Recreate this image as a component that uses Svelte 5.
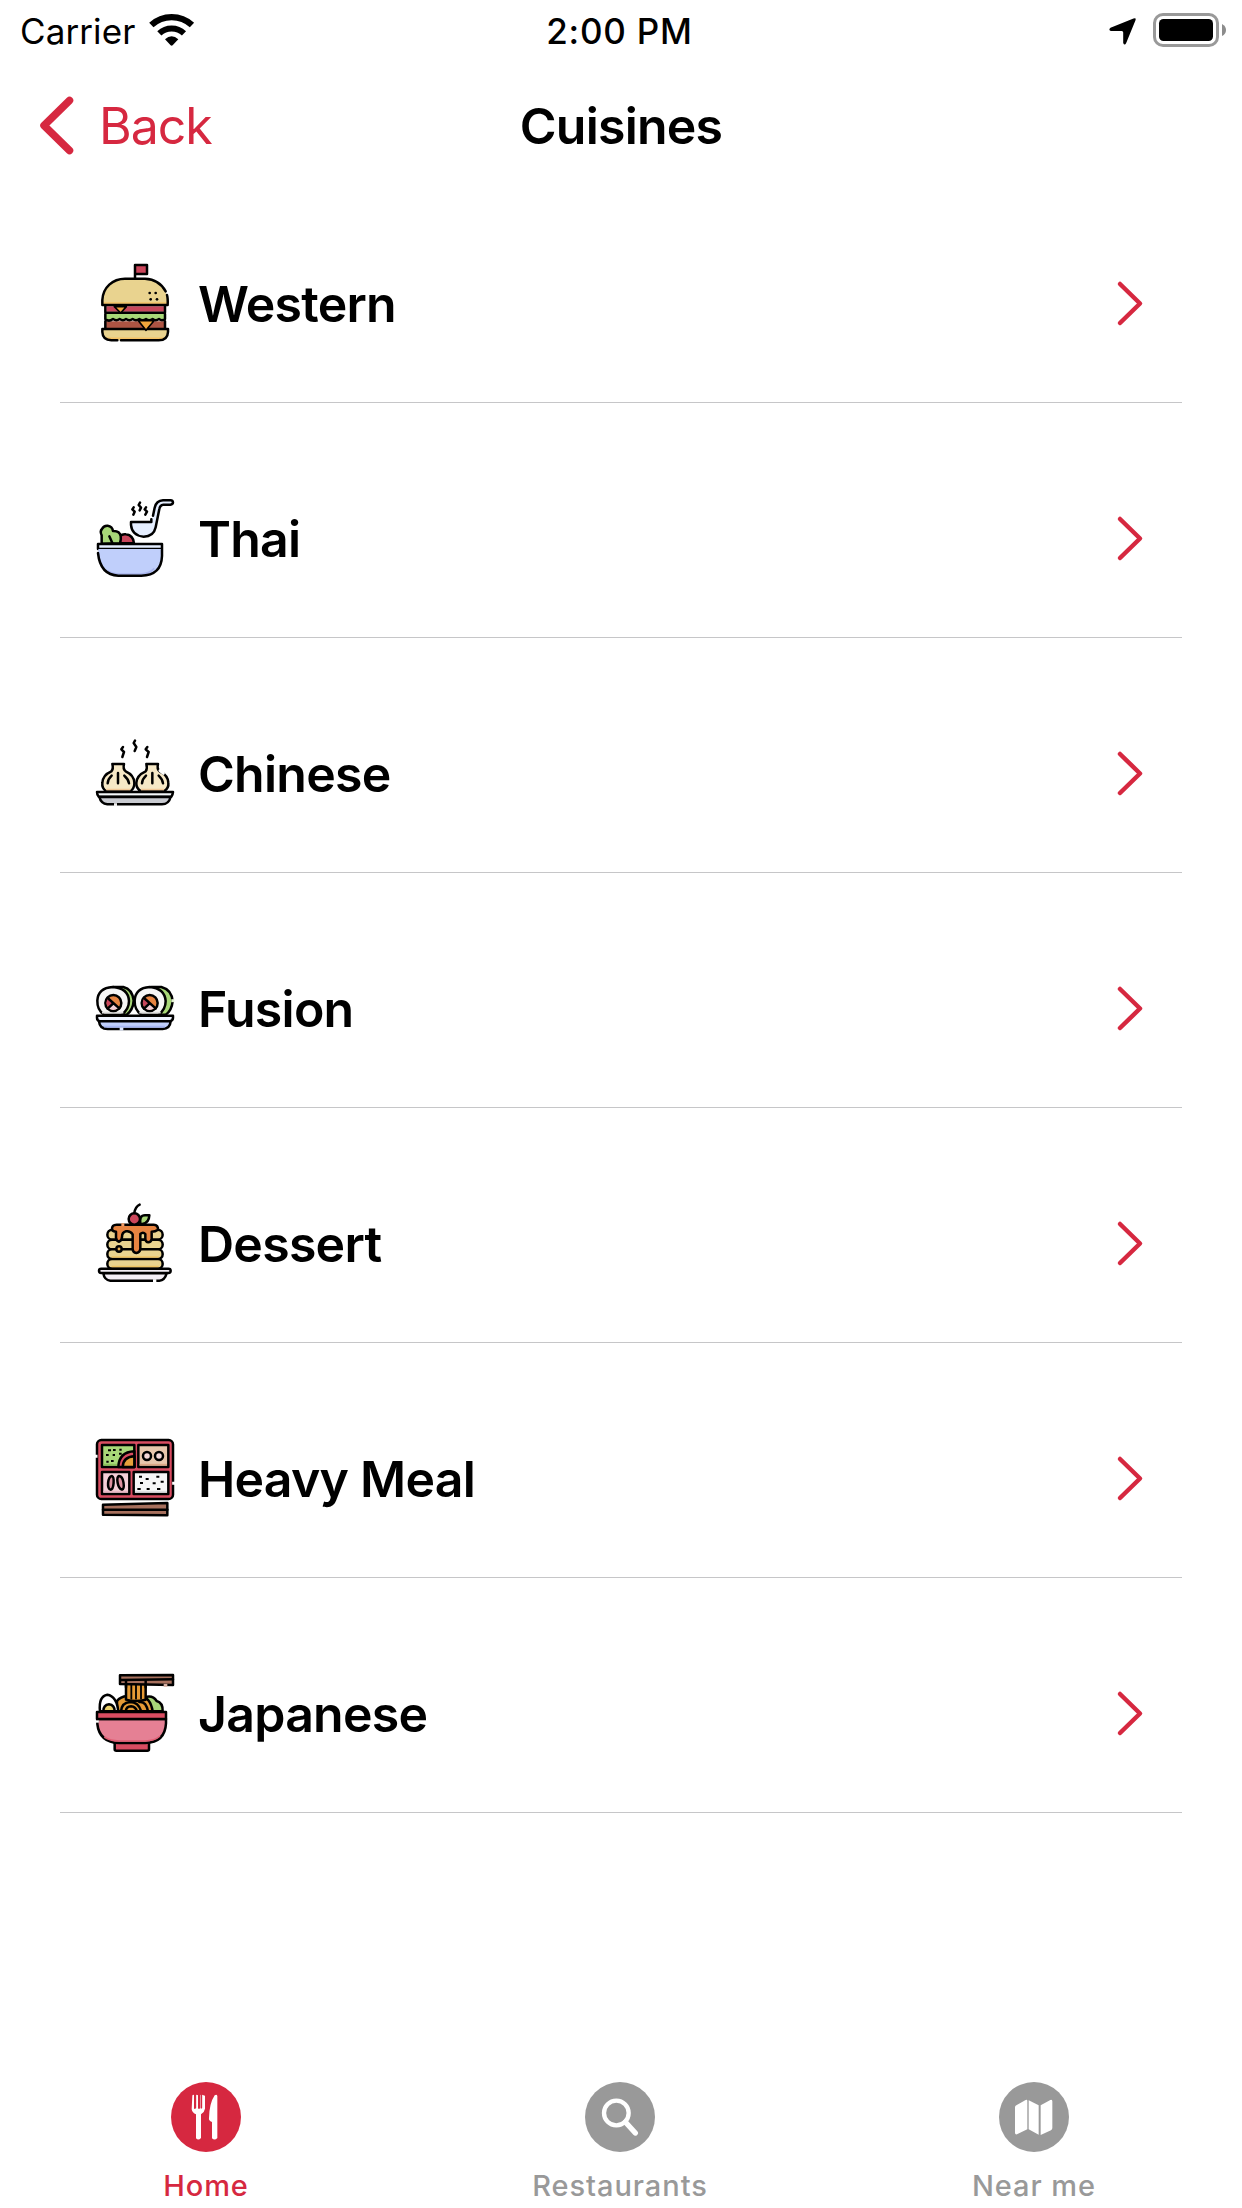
<script>
  const cuisines = ['Western', 'Thai', 'Chinese', 'Fusion', 'Dessert', 'Heavy Meal', 'Japanese'];
  const tabs = [
    { id: 'home', label: 'Home' },
    { id: 'restaurants', label: 'Restaurants' },
    { id: 'near', label: 'Near me' }
  ];
  let active = $state('home');
</script>

<div class="screen">
  <header class="status">
    <div class="carrier">
      <span>Carrier</span>
      <svg class="wifi" viewBox="0 0 136 98">
        <path d="M7 36A90 90 0 0 1 129 36" fill="none" stroke="#000" stroke-width="19" />
        <path d="M31 61A54 54 0 0 1 105 61" fill="none" stroke="#000" stroke-width="18" />
        <path d="M48 79Q68 61 88 79L71 97Q68 99 65 97Z" />
      </svg>
    </div>
    <span class="time">2:00 PM</span>
    <div class="indicators">
      <svg class="location" viewBox="0 0 27 27"><path d="M24.5.6Q27.6-.6 26.5 2.3L17.2 25Q15.6 28 14.2 25V14.5Q14.200 13 12.800 13H2Q-1 12 1.500 9.800Z" /></svg>
      <svg class="battery" viewBox="0 0 74 34">
        <rect x="1.500" y="1.500" width="63" height="31" rx="8.500" fill="none" stroke="#999" stroke-width="3" />
        <rect x="6" y="6" width="54" height="22" rx="4.500" />
        <path d="M69 11Q73 13 73 17T69 23Z" fill="#8c8c8c" />
      </svg>
    </div>
  </header>

  <nav class="navbar">
    <button class="back">
      <svg class="back-icon" viewBox="0 0 33 57"><path d="M29.500 3.500L4 28.500L29.500 53.500" /></svg>
      <span>Back</span>
    </button>
    <h1>Cuisines</h1>
  </nav>

  <ul class="list">
    {#each cuisines as name}
      <li class="row">
        {#if name === 'Western'}
          <svg class="food" viewBox="48 42 234 234">
            <path d="M165 84V45H201V72H168" fill="#cb465b" />
            <path d="M67 165V150C69 112 98 86 135 86H195C233 87 258 111 263 148V165Z" fill="#e9d38f" stroke="none" />
            <path d="M70 159H262" class="shade" stroke="#f5c265" />
            <path d="M79 169H252V185H79Z" fill="#c8465b" stroke="none" />
            <path d="M76 192H255V207Q246 214 237 207Q227 214 218 207Q207 214 198 207Q188 214 178 207Q168 214 158 207Q148 214 138 207Q129 214 119 207Q109 214 99 207Q86 217 76 207Z" fill="#a8d878" stroke="none" />
            <path d="M76 214H255V235H76Z" fill="#ad5443" stroke="none" />
            <path d="M67 237H264V246Q263 271 236 271H94Q68 270 67 246Z" fill="#e9d38f" stroke="none" />
            <path d="M76 265H254" class="shade" stroke="#f5c265" />
            <path d="M67 165V150C69 112 98 86 135 86H195Q238 88 257 124M261 135Q264 145 263 165H67M76 188H255M76 168V187M255 168V187M76 192V207Q86 217 99 207Q109 214 119 207Q129 214 138 207Q148 214 158 207Q168 214 178 207Q188 214 198 207Q207 214 218 207Q227 214 237 207Q246 214 255 207V192M76 214V235M255 214V235M112 271H94Q68 270 67 246V237H264V246Q263 271 236 271H123" fill="none" />
            <path d="M103 170H139L122 189ZM175 212H222L198 241Z" fill="#f2a63c" stroke-width="5" />
            <g fill="#000" stroke="none"><circle cx="209" cy="129" r="4" /><circle cx="227" cy="129" r="4" /><circle cx="212" cy="148" r="4" /><circle cx="231" cy="148" r="4" /></g>
          </svg>
        {:else if name === 'Thai'}
          <svg class="food" viewBox="48 42 234 234">
            <path d="M120 175V153Q128 146 138 148Q160 151 162 175Z" fill="#c9465c" />
            <path d="M65 176V151Q59 139 66 132Q71 121 83 122Q97 124 99 138Q119 137 122 153Q124 161 120 175Z" fill="#a8d878" />
            <path d="M88 154L97 174" />
            <path d="M54 177H246V192H54Z" fill="#e5eeff" />
            <path d="M55 206V192H246V213Q244 271 184 272H115Q62 270 55 206Z" fill="#c0cffb" stroke="none" />
            <path d="M83 257Q98 267 120 267H180Q207 267 223 250" class="shade" stroke="#a8b5ed" />
            <path d="M54 204Q61 270 115 272H184Q244 271 246 213V194" fill="none" />
            <path d="M153 111H214L224 68Q229 48 247 46H274Q280 47 278 54Q277 58 271 58H250Q241 59 238 70L227 127Q221 155 191 155Q156 152 153 120Z" fill="#e5eeff" stroke="none" />
            <path d="M214 103V111H153V120Q156 152 191 155Q221 155 227 127L238 72Q240 60 250 59H271Q279 58 279 52Q278 46 272 46H249Q229 47 224 68L219 92" fill="none" />
            <path d="M161 67L157 73L164 80L160 89M180 53L176 60L183 68L179 76M198 67L194 73L201 80L196 89" fill="none" />
          </svg>
        {:else if name === 'Chinese'}
          <svg class="food" viewBox="48 27 234 234">
            <path d="M79 199Q65 190 67 174Q68 150 94 139Q101 131 97 117H132Q128 132 137 139Q162 150 163 173Q164 190 151 199Z" fill="#f6e8c6" />
            <path d="M183 199Q168 190 169 174Q170 151 197 139Q203 131 199 117H234Q230 132 239 139Q264 151 265 173Q267 190 252 199Z" fill="#f6e8c6" />
            <path d="M79 194H151M183 194H252" class="shade" stroke="#f2c999" />
            <path d="M240 137L250 145" stroke="#fff" stroke-width="9" />
            <path d="M114 144V175M95 152Q84 162 83 175M133 152Q145 162 147 175M217 144V175M198 152Q187 162 186 175M236 152Q247 162 249 175" fill="none" />
            <path d="M51 201H279Q278 210 274 215H56Q51 210 51 201Z" fill="#f5f8fa" />
            <path d="M58 216H272Q266 238 246 238H82Q63 236 58 216Z" fill="#c9cbd1" />
            <path d="M102 239H111" class="gap" stroke="#eee" />
            <path d="M129 66L124 73L132 81L127 96M165 47L161 54L169 66L164 78M202 66L197 73L206 81L201 96" fill="none" />
          </svg>
        {:else if name === 'Fusion'}
          <svg class="food" viewBox="48 -3 234 234">
            <path d="M100 51H130Q157 57 161 92Q159 121 140 134H97Z" fill="#a8d878" />
            <path d="M214 51H244Q275 59 278 94Q275 122 257 134H214Z" fill="#a8d878" />
            <path d="M72 134Q51 120 52 92Q54 54 98 51Q145 54 147 93Q147 118 125 134Z" fill="#f5f5f5" />
            <path d="M184 134Q163 120 164 92Q166 54 209 51Q254 55 257 93Q257 118 236 134Z" fill="#f5f5f5" />
            <path d="M66 128H130M178 128H242" class="shade" stroke="#dedede" />
            {#each [0, 109] as shift}
              <g transform="translate({shift} 0)">
                <circle cx="100" cy="99" r="24" fill="#e78441" />
                <path d="M84 84Q74 99 85 112L99 99Z" fill="#c9465c" stroke="none" />
                <path d="M86 115Q100 125 115 114L100 101Z" fill="#f4cfd6" stroke="none" />
                <path d="M83 84L118 115M99 101L83 116" />
              </g>
            {/each}
            <path d="M274 92H283" class="gap" stroke="#e4f4d3" />
            <path d="M51 137H279V143Q279 151 270 154H59Q51 151 51 143Z" fill="#eef3ff" />
            <path d="M57 154H272Q270 176 248 177H83Q59 177 57 154Z" fill="#c0cffb" />
            <path d="M72 170H255" class="shade" stroke="#a8b7f3" />
            <path d="M119 177H130" class="gap" stroke="#dfe8ff" />
          </svg>
        {:else if name === 'Dessert'}
          <svg class="food" viewBox="48 42 234 234">
            <g fill="#e9d38f">
              <rect x="82" y="119" width="166" height="30" rx="15" />
              <rect x="82" y="149" width="166" height="29" rx="14" />
              <rect x="82" y="178" width="166" height="29" rx="14" />
              <rect x="82" y="207" width="166" height="29" rx="14" />
            </g>
            <path d="M95 201H236M95 230H236" class="shade" stroke="#f0c565" />
            <path d="M96 119Q95 104 110 104H221Q235 105 234 119Q226 125 215 125V147Q213 157 205 157Q197 156 196 148V132Q189 124 181 132V178Q179 188 169 189Q159 187 158 178V133Q151 122 138 124Q126 127 126 141Q125 153 117 155Q109 153 108 143V125Q99 125 96 119Z" fill="#e78441" />
            <path d="M124 104H133" class="gap" stroke="#f0a06c" />
            <circle cx="117" cy="177" r="8" fill="#e5ae52" />
            <path d="M181 101Q177 76 195 76H208Q207 99 187 102Z" fill="#a8d878" />
            <circle cx="163" cy="87" r="17" fill="#cb465b" />
            <path d="M163 69Q166 50 179 44" fill="none" />
            <rect x="57" y="236" width="215" height="13" rx="6.500" fill="#f1ecf3" />
            <path d="M70 250H260Q254 271 238 272H91Q73 270 70 250Z" fill="#f4eff6" />
            <path d="M219 272H229" class="gap" stroke="#fff" />
          </svg>
        {:else if name === 'Heavy Meal'}
          <svg class="food" viewBox="48 42 234 234">
            <rect x="51" y="45" width="228" height="177" rx="13" fill="#d94c61" />
            <path d="M66 60H163V126H66Z" fill="#a8d878" /><path d="M175 60H265V126H175Z" fill="#e8c7ad" />
            <path d="M66 141H148V207H66Z" fill="#f4cfd8" /><path d="M161 141H265V207H161Z" fill="#f7f7f7" />
            <path d="M70 119H114" class="shade" stroke="#8bc15a" /><path d="M179 119H261" class="shade" stroke="#dda785" /><path d="M70 200H144" class="shade" stroke="#eab7c4" /><path d="M165 200H261" class="shade" stroke="#dedfe2" />
            <path d="M115 126Q117 81 163 79V126Z" fill="#d94c61" /><path d="M128 126Q129 96 163 94V126Z" fill="#e7a13b" />
            <circle cx="201" cy="93" r="12" fill="#f4d8d9" /><circle cx="237" cy="93" r="12" fill="#f4d8d9" />
            <path d="M96 153C104 157 102 192 92 194C80 194 82 156 96 153ZM117 153C132 154 135 191 126 194C112 190 108 157 117 153Z" fill="#df91a1" />
            <path d="M84 76h9M99 75h8M117 86h8M118 74h7M78 90h8M98 90h7M79 110h7M93 108h8M177 155h9M197 162h9M229 155h9M242 170h9M180 174h9M218 175h9M172 192h10M200 192h9M231 192h10" class="grains" />
            <path d="M69 239L262 234V271L69 269Z" fill="#a7705d" /><path d="M69 254H262" />
            <path d="M48 89V98M281 170V179" class="gap" stroke="#fff" />
          </svg>
        {:else}
          <svg class="food" viewBox="48 42 234 234">
            <path d="M194 154V112Q218 104 230 123Q249 128 248 154Z" fill="#a8d878" />
            <path d="M111 154V123Q121 110 142 108H181Q211 111 218 154Z" fill="#e59a35" />
            <path d="M138 58H197V119Q166 127 138 119Z" fill="#e59a35" />
            <path d="M154 58V116M168 58V116M183 58V116" stroke-width="5.500" />
            <path d="M123 154Q125 128 150 126Q175 126 184 154M137 154Q139 139 153 139Q167 140 171 154M178 126Q198 123 204 154" fill="none" />
            <path d="M60 154Q55 109 82 104Q110 108 115 154Z" fill="#fff" /><path d="M70 154Q70 135 87 133Q104 135 104 154Z" fill="#ead06b" />
            <path d="M120 46L279 45V75L120 72Z" fill="#a7705d" /><path d="M121 60L279 58" />
            <path d="M138 63V82M197 63V82" /><path d="M251 76H262" class="gap" stroke="#d7b1a4" />
            <path d="M104 246H207V268Q207 272 202 272H109Q104 272 104 268Z" fill="#d94c61" />
            <path d="M52 177H258V190Q255 247 196 249H118Q58 247 52 192Z" fill="#e58094" />
            <path d="M73 231Q90 243 118 243H195Q225 242 240 228" class="shade" stroke="#df5e73" />
            <path d="M51 156H258V177H51Z" fill="#d94c61" /><path d="M52 181V188" class="gap" stroke="#fff" />
          </svg>
        {/if}
        <span class="name">{name}</span>
        <svg class="chevron" viewBox="0 0 24 43"><path d="M2 2L22 21.500L2 41" /></svg>
      </li>
    {/each}
  </ul>

  <nav class="tabs">
    {#each tabs as tab}
      <button class="tab" class:active={active === tab.id} onclick={() => (active = tab.id)}>
        <svg class="tab-icon" viewBox="0 0 210 210">
          <circle cx="105" cy="105" r="105" fill="currentColor" />
          {#if tab.id === 'home'}
            <path d="M64 41Q65 37 69 39V79Q70 83 73 79V40Q77 36 81 40V79Q84 83 87 79V40Q91 36 95 39L102 41V80Q100 91 90 97V168Q82 177 75 169V97Q64 93 62 82Z" fill="#fff" />
            <path d="M73 37V77M91 37V77" stroke="currentColor" stroke-width="5" stroke-linecap="round" />
            <path d="M139 42V168Q131 177 123 169V120Q112 116 114 108Q115 64 131 40Q137 35 139 42Z" fill="#fff" />
          {:else if tab.id === 'restaurants'}
            <circle cx="94" cy="93" r="37" fill="none" stroke="#fff" stroke-width="13" />
            <path d="M121 120L151 153" stroke="#fff" stroke-width="16" stroke-linecap="round" />
          {:else}
            <path d="M52 70L80 54Q85 51 85 57V142L54 157Q48 158 48 153V76Q48 72 52 70ZM89 55L119 70V158L89 142ZM125 70L154 54Q160 52 160 58V138Q160 142 156 145L125 159Z" fill="#fff" />
          {/if}
        </svg>
        <span>{tab.label}</span>
      </button>
    {/each}
  </nav>
</div>

<style>
  :global(body) { background: #fff; }
  .screen {
    width: 1242px;
    height: 2208px;
    display: flex;
    flex-direction: column;
    overflow: hidden;
    background: #fff;
    color: #000;
    font-family: Inter, 'Liberation Sans', sans-serif;
  }
  svg { display: block; flex: none; overflow: visible; }
  button { border: 0; padding: 0; background: none; font: inherit; color: inherit; }
  .status {
    height: 60px;
    display: grid;
    grid-template-columns: 1fr auto 1fr;
    padding: 0 15px 0 20px;
    font-size: 35px;
    line-height: 62px;
  }
  .carrier { display: flex; gap: 14px; letter-spacing: 0.1px; }
  .wifi { width: 45.300px; height: 32.700px; margin-top: 13px; }
  .time { font-weight: 500; letter-spacing: 0.800px; margin: 0 4px 0 -4px; }
  .indicators { display: flex; justify-content: flex-end; gap: 17px; }
  .location { width: 27px; height: 27px; margin-top: 18px; }
  .battery { width: 74px; height: 34px; margin-top: 13px; }
  .navbar {
    height: 108px;
    display: grid;
    grid-template-columns: 1fr auto 1fr;
    padding: 0 40px;
    font-size: 50px;
    line-height: 132px;
  }
  .back { display: flex; gap: 26px; color: #d62840; letter-spacing: -1px; }
  .back-icon { width: 33px; height: 57px; margin-top: 37px; }
  .back-icon path, .chevron path { fill: none; stroke: #d62840; stroke-linecap: round; stroke-linejoin: round; }
  .back-icon path { stroke-width: 7.500; }
  h1 { margin: 0; font-size: 50px; font-weight: 600; letter-spacing: -0.800px; }
  .list { margin: 0; padding: 0 60px; list-style: none; }
  .row {
    box-sizing: border-box;
    height: 235px;
    padding: 36px 40px 0 36px;
    display: flex;
    align-items: center;
    border-bottom: 1px solid #c6c6c8;
  }
  .food { width: 78px; height: 78px; stroke: #000; stroke-width: 7.500; stroke-linecap: round; stroke-linejoin: round; }
  .food .shade { fill: none; stroke-width: 5; stroke-linecap: butt; }
  .food .gap { stroke-width: 9; stroke-linecap: butt; }
  .food .grains { stroke-width: 6; stroke-linecap: butt; }
  .name { flex: 1; margin-left: 24px; padding-top: 2px; font-size: 50px; line-height: 60px; font-weight: 600; letter-spacing: -0.750px; }
  .chevron { width: 24px; height: 43px; }
  .chevron path { stroke-width: 4.500; }
  .tabs { margin: auto 1px 0 -1px; height: 126px; display: grid; grid-template-columns: repeat(3, 1fr); }
  .tab { display: flex; flex-direction: column; align-items: center; gap: 16px; color: #999; font-size: 29px; line-height: 36px; font-weight: 500; letter-spacing: 0.950px; }
  .tab.active { color: #d62840; }
  .tab-icon { width: 70px; height: 70px; }
</style>
